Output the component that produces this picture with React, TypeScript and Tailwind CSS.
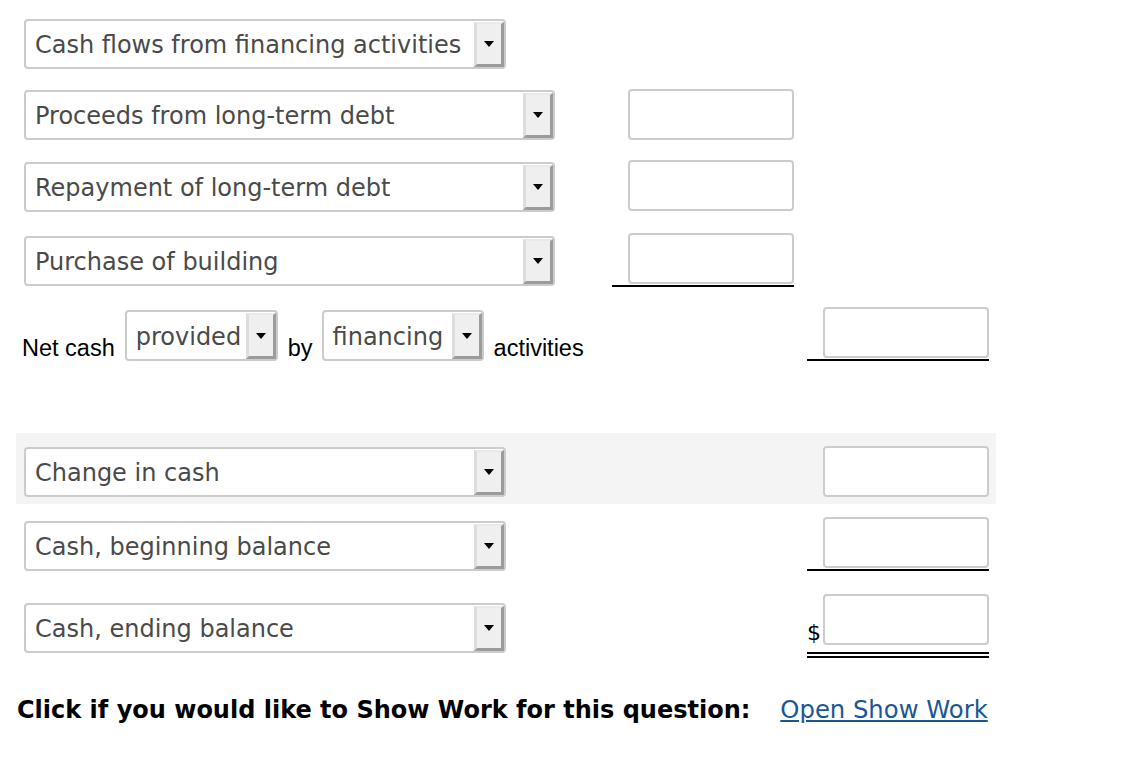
import React from 'react';

const dv = { fontFamily: '"DejaVu Sans", Verdana, sans-serif' };
const lib = { fontFamily: '"Liberation Sans", Arial, sans-serif' };

interface SelectProps {
    label: string;
    className?: string;
}

const Select: React.FC<SelectProps> = ({ label, className = '' }) => (
    <div className={`flex h-[50px] items-stretch rounded-[4px] border-2 border-[#cccccc] bg-white ${className}`}>
        <div className="flex flex-1 items-center overflow-hidden whitespace-nowrap pl-[9px] pt-[2px] text-[24px] text-[#4a4a4a]" style={dv}>
            {label}
        </div>
        <div className="mt-[1px] flex w-[30px] items-center justify-center border-l-[3px] border-t-[2px] border-r-[3px] border-b-[3px] border-l-[#dddddd] border-t-[#e9e9e9] border-r-[#9b9b9b] border-b-[#9b9b9b] bg-[#efefef]">
            <span className="h-0 w-0 border-l-[5px] border-r-[5px] border-t-[6px] border-l-transparent border-r-transparent border-t-black"></span>
        </div>
    </div>
);

const Box: React.FC<{ className?: string }> = ({ className = '' }) => (
    <div className={`h-[51px] w-[166px] rounded-[4px] border-2 border-[#cccccc] bg-white ${className}`}></div>
);

export default function App() {
    return (
        <div className="h-[762px] w-[1140px] bg-white pl-[16px] pt-[19px]">
            {/* heading select */}
            <div className="flex pl-2">
                <Select label="Cash flows from financing activities" className="w-[482px]" />
            </div>

            {/* line items */}
            <div className="mt-[20px] flex pl-2">
                <div className="w-[588px] pt-[1px]">
                    <Select label="Proceeds from long-term debt" className="w-[531px]" />
                </div>
                <div className="w-[182px] pl-4">
                    <Box />
                </div>
            </div>
            <div className="mt-[20px] flex pl-2">
                <div className="w-[588px] pt-[2px]">
                    <Select label="Repayment of long-term debt" className="w-[531px]" />
                </div>
                <div className="w-[182px] pl-4">
                    <Box />
                </div>
            </div>
            <div className="mt-[21px] flex pl-2">
                <div className="w-[588px] pt-[3px]">
                    <Select label="Purchase of building" className="w-[531px]" />
                </div>
                <div className="w-[182px] border-b-2 border-black pb-[1px] pl-4">
                    <Box />
                </div>
            </div>

            {/* net cash row */}
            <div className="mt-[20px] flex pl-2">
                <div className="flex w-[588px] items-end">
                    <span className="ml-[-2px] mb-[1px] text-[23.5px] leading-none text-black" style={lib}>Net cash</span>
                    <Select label="provided" className="ml-[10px] h-[51px] w-[153px]" />
                    <span className="ml-[10px] mb-[1px] text-[23.5px] leading-none text-black" style={lib}>by</span>
                    <Select label="financing" className="ml-[9px] h-[51px] w-[162px]" />
                    <span className="ml-[10px] mb-[1px] text-[23.5px] leading-none text-black" style={lib}>activities</span>
                </div>
                <div className="w-[182px]"></div>
                <div className="ml-[13px] w-[182px] border-b-2 border-black pb-[1px] pl-4">
                    <Box />
                </div>
            </div>

            {/* shaded total row */}
            <div className="mt-[72px] flex h-[71px] w-[980px] items-start bg-[#f4f4f4] pl-2 pt-[13px]">
                <div className="w-[588px] pt-[1px]">
                    <Select label="Change in cash" className="w-[482px]" />
                </div>
                <div className="w-[182px]"></div>
                <div className="ml-[13px] w-[182px] pl-4">
                    <Box />
                </div>
            </div>

            <div className="mt-[13px] flex pl-2">
                <div className="w-[588px] pt-[4px]">
                    <Select label="Cash, beginning balance" className="w-[482px]" />
                </div>
                <div className="w-[182px]"></div>
                <div className="ml-[13px] w-[182px] border-b-2 border-black pb-[1px] pl-4">
                    <Box />
                </div>
            </div>

            <div className="mt-[23px] flex pl-2">
                <div className="w-[588px] pt-[9px]">
                    <Select label="Cash, ending balance" className="w-[482px]" />
                </div>
                <div className="w-[182px]"></div>
                <div className="ml-[13px] flex w-[182px] items-end border-b-[6px] border-double border-black pb-[7px]">
                    <span className="mb-[1px] w-4 text-[22px] leading-none text-black" style={dv}>$</span>
                    <Box />
                </div>
            </div>

            {/* show work */}
            <div className="mt-[34px] flex items-baseline pl-[1px]">
                <span className="text-[24px] font-bold text-black" style={dv}>
                    Click if you would like to Show Work for this question:
                </span>
                <a href="#" className="ml-[30px] text-[24.3px] text-[#1a5792] underline" style={dv}>
                    Open Show Work
                </a>
            </div>
        </div>
    );
}
